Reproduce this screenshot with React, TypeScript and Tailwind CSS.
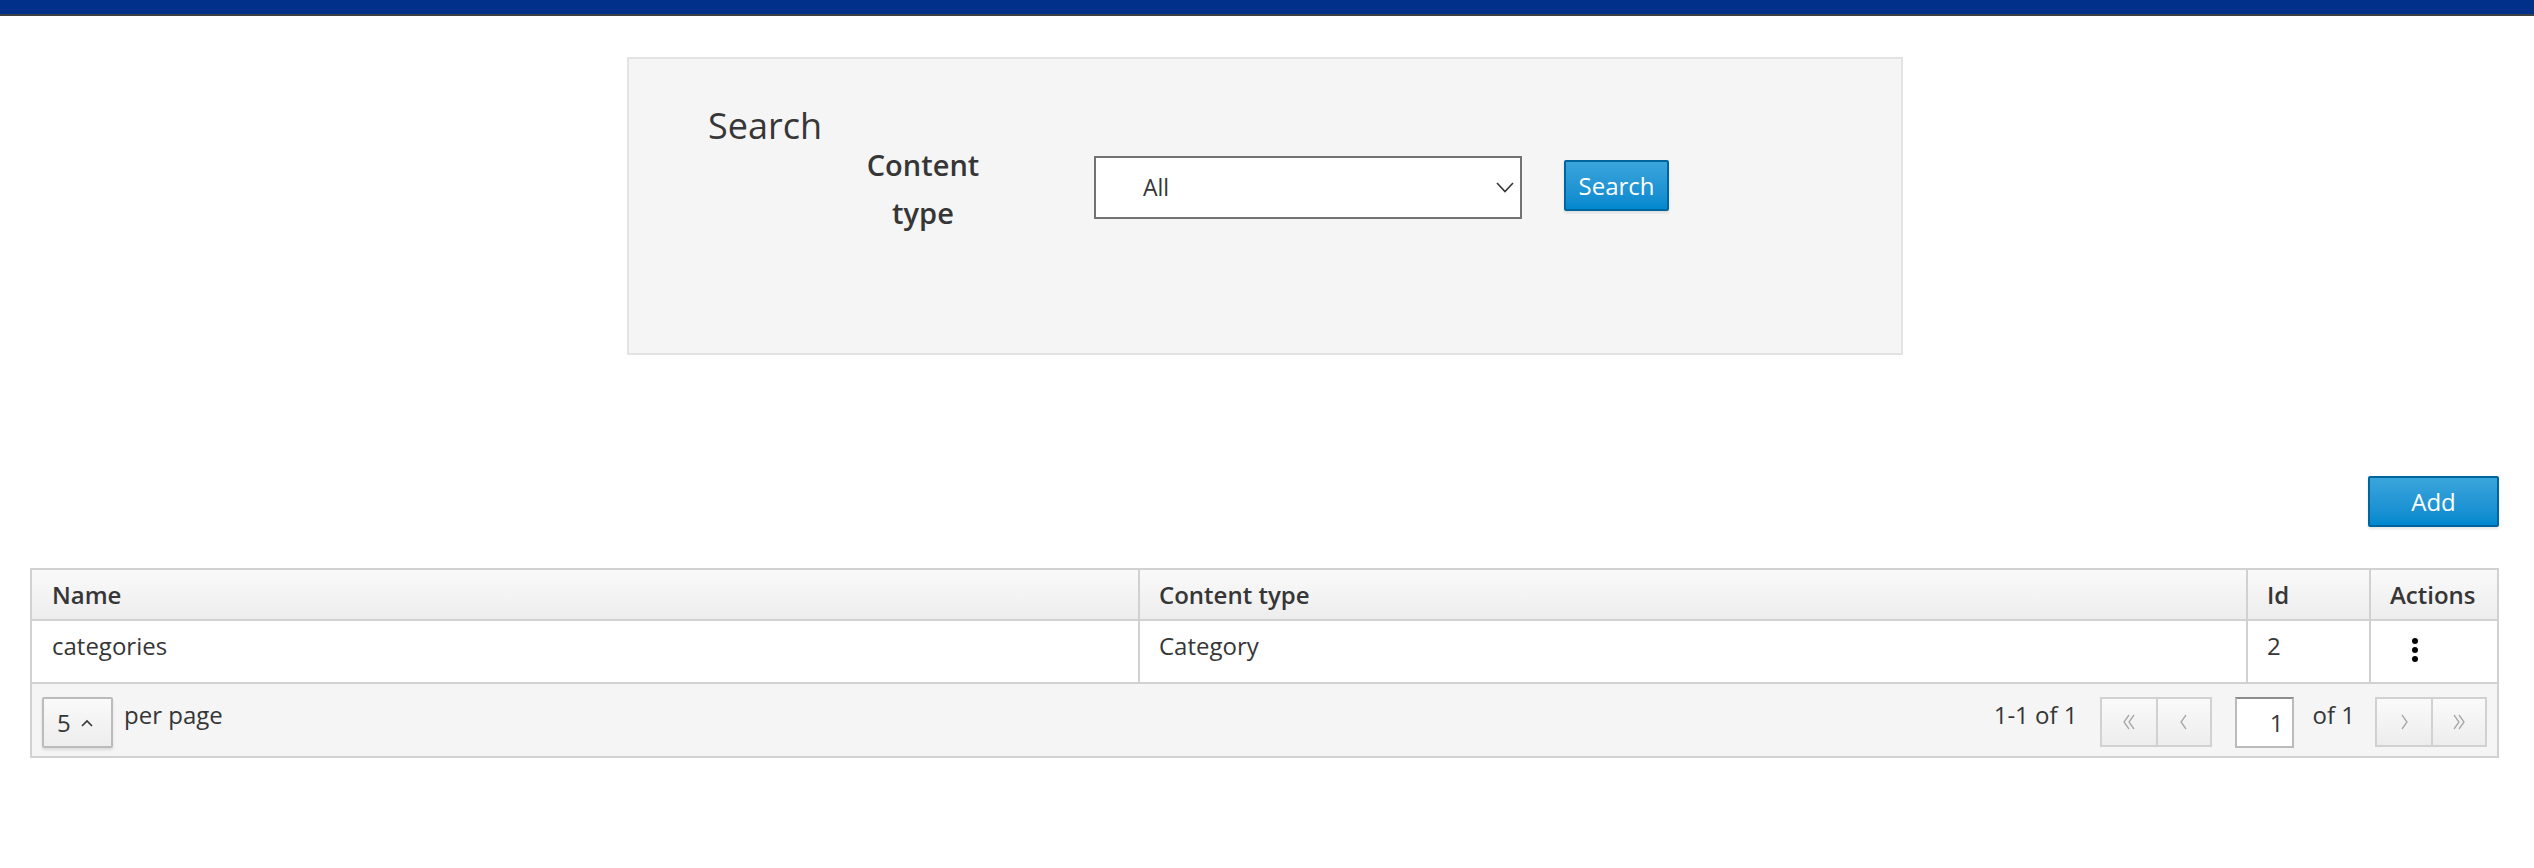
import React from "react";

function Chev({ dir, double }: { dir: "l" | "r"; double?: boolean }) {
  const single = dir === "l" ? "M9 2 L4 9 L9 16" : "M4 2 L9 9 L4 16";
  const second = dir === "l" ? "M14 2 L9 9 L14 16" : "M9 2 L14 9 L9 16";
  return (
    <svg width={double ? 18 : 13} height="18" viewBox={double ? "0 0 18 18" : "0 0 13 18"} fill="none" stroke="#a7a7a7" strokeWidth="1.3">
      <path d={single} />
      {double && <path d={second} />}
    </svg>
  );
}

export default function App() {
  return (
    <div className="min-h-[868px] bg-white font-['Open_Sans',sans-serif] text-[#363636]">
      <div className="h-[14px] bg-[#00308a]" />
      <div className="h-[2px] bg-[#393f44]" />

      <div className="pt-[41px]">
        <div className="ml-[627px] box-border h-[298px] w-[1276px] border-2 border-[#e3e3e3] bg-[#f5f5f5] pl-[79px] pt-[53px]">
          <h1 className="text-[36px] font-normal leading-[28px]">Search</h1>
          <div className="flex items-start pt-[1px]">
            <div className="ml-[138px] w-[154px] text-center text-[29px] font-semibold leading-[48px]">Content type</div>
            <div className="ml-[94px] mt-[15px] box-border flex h-[63px] w-[428px] items-center justify-between border-2 border-[#737373] bg-white pl-[47px] pr-[6px]">
              <span className="text-[23px] leading-none">All</span>
              <svg width="18" height="11" viewBox="0 0 18 11" fill="none" stroke="#363636" strokeWidth="1.6">
                <path d="M1 1 L9 9.5 L17 1" />
              </svg>
            </div>
            <button className="ml-[42px] mt-[19px] box-border h-[51px] w-[105px] rounded-[2px] border-2 border-[#00659c] bg-linear-to-b from-[#39a5dc] to-[#0088ce] text-[24px] leading-none text-white shadow-[0_2px_3px_rgba(3,3,3,0.1)]">
              Search
            </button>
          </div>
        </div>
      </div>

      <div className="pl-[30px] pr-[35px]">
        <div className="flex justify-end pt-[121px]">
          <button className="box-border h-[51px] w-[131px] rounded-[2px] border-2 border-[#00659c] bg-linear-to-b from-[#39a5dc] to-[#0088ce] text-[24px] leading-none text-white shadow-[0_2px_3px_rgba(3,3,3,0.1)]">
            Add
          </button>
        </div>

        <div className="mt-[41px] border-2 border-[#d1d1d1]">
          <div className="grid h-[51px] grid-cols-[1106px_1108px_123px_128px] border-b-2 border-[#d1d1d1] bg-linear-to-b from-[#fafafa] to-[#ededed] text-[24px] font-semibold">
            <div className="flex items-center pl-[20px]">Name</div>
            <div className="flex items-center border-l-2 border-[#d1d1d1] pl-[19px]">Content type</div>
            <div className="flex items-center border-l-2 border-[#d1d1d1] pl-[19px]">Id</div>
            <div className="flex items-center border-l-2 border-[#d1d1d1] pl-[19px]">Actions</div>
          </div>
          <div className="grid h-[63px] grid-cols-[1106px_1108px_123px_128px] border-b-2 border-[#d1d1d1] bg-white text-[24px] leading-[40px]">
            <div className="pl-[20px] pt-[5px]">categories</div>
            <div className="border-l-2 border-[#d1d1d1] pl-[19px] pt-[5px]">Category</div>
            <div className="border-l-2 border-[#d1d1d1] pl-[19px] pt-[5px]">2</div>
            <div className="border-l-2 border-[#d1d1d1] pl-[41px] pt-[17px]">
              <div className="flex w-[6px] flex-col gap-[3px]">
                <div className="h-[6px] w-[6px] rounded-full bg-[#030303]" />
                <div className="h-[6px] w-[6px] rounded-full bg-[#030303]" />
                <div className="h-[6px] w-[6px] rounded-full bg-[#030303]" />
              </div>
            </div>
          </div>
          <div className="flex h-[72px] items-start justify-between bg-[#f5f5f5] pl-[10px] pr-[10px] pt-[13px] text-[24px]">
            <div className="flex items-start">
              <div className="box-border flex h-[51px] w-[71px] items-center rounded-[2px] border-2 border-[#bbbbbb] bg-linear-to-b from-[#fafafa] to-[#ededed] pl-[13px] shadow-[0_2px_3px_rgba(3,3,3,0.1)]">
                <span className="leading-none">5</span>
                <svg className="ml-[10px]" width="12" height="8" viewBox="0 0 12 8" fill="none" stroke="#363636" strokeWidth="1.6">
                  <path d="M1 7 L6 2 L11 7" />
                </svg>
              </div>
              <span className="ml-[11px] leading-[36px]">per page</span>
            </div>
            <div className="flex items-start">
              <span className="mr-[22px] leading-[36px]">1-1 of 1</span>
              <div className="box-border flex h-[50px] border-2 border-[#d1d1d1] bg-linear-to-b from-[#fafafa] to-[#ededed]">
                <div className="flex w-[54px] items-center justify-center"><Chev dir="l" double /></div>
                <div className="flex w-[54px] items-center justify-center border-l-2 border-[#d1d1d1]"><Chev dir="l" /></div>
              </div>
              <div className="ml-[23px] box-border flex h-[51px] w-[59px] items-center justify-end border-2 border-[#bbbbbb] border-t-[#8b8d8f] bg-white pr-[8px]">
                <span className="leading-none">1</span>
              </div>
              <span className="ml-[19px] mr-[20px] leading-[36px]">of 1</span>
              <div className="box-border flex h-[50px] border-2 border-[#d1d1d1] bg-linear-to-b from-[#fafafa] to-[#ededed]">
                <div className="flex w-[54px] items-center justify-center"><Chev dir="r" /></div>
                <div className="flex w-[54px] items-center justify-center border-l-2 border-[#d1d1d1]"><Chev dir="r" double /></div>
              </div>
            </div>
          </div>
        </div>
      </div>
    </div>
  );
}
